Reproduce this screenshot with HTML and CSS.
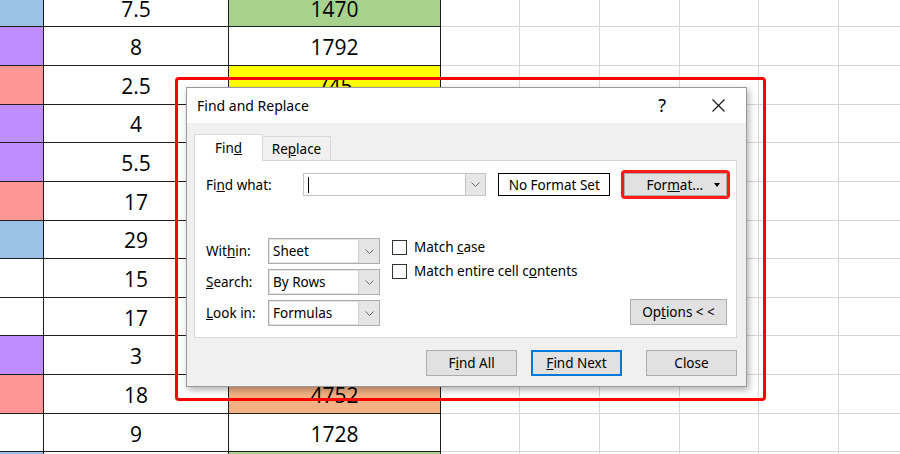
FILE: index.html
```html
<!DOCTYPE html>
<html lang="en">
<head>
    <meta charset="UTF-8">
    <meta name="viewport" content="width=device-width, initial-scale=1.0">
    <title>Find and Replace</title>
    <link rel="stylesheet" href="styles.css">
</head>
<body>

<div class="sheet">
    <!-- row 1 -->
    <div class="cell dark blue"></div><div class="cell dark">7.5</div><div class="cell dark green">1470</div>
    <div class="cell"></div><div class="cell"></div><div class="cell"></div><div class="cell"></div><div class="cell"></div><div class="cell"></div>
    <!-- row 2 -->
    <div class="cell dark purple"></div><div class="cell dark">8</div><div class="cell dark">1792</div>
    <div class="cell"></div><div class="cell"></div><div class="cell"></div><div class="cell"></div><div class="cell"></div><div class="cell"></div>
    <!-- row 3 -->
    <div class="cell dark salmon"></div><div class="cell dark">2.5</div><div class="cell dark yellow">745</div>
    <div class="cell"></div><div class="cell"></div><div class="cell"></div><div class="cell"></div><div class="cell"></div><div class="cell"></div>
    <!-- row 4 -->
    <div class="cell dark purple"></div><div class="cell dark">4</div><div class="cell dark"></div>
    <div class="cell"></div><div class="cell"></div><div class="cell"></div><div class="cell"></div><div class="cell"></div><div class="cell"></div>
    <!-- row 5 -->
    <div class="cell dark purple"></div><div class="cell dark">5.5</div><div class="cell dark"></div>
    <div class="cell"></div><div class="cell"></div><div class="cell"></div><div class="cell"></div><div class="cell"></div><div class="cell"></div>
    <!-- row 6 -->
    <div class="cell dark salmon"></div><div class="cell dark">17</div><div class="cell dark"></div>
    <div class="cell"></div><div class="cell"></div><div class="cell"></div><div class="cell"></div><div class="cell"></div><div class="cell"></div>
    <!-- row 7 -->
    <div class="cell dark blue"></div><div class="cell dark">29</div><div class="cell dark"></div>
    <div class="cell"></div><div class="cell"></div><div class="cell"></div><div class="cell"></div><div class="cell"></div><div class="cell"></div>
    <!-- row 8 -->
    <div class="cell dark"></div><div class="cell dark">15</div><div class="cell dark"></div>
    <div class="cell"></div><div class="cell"></div><div class="cell"></div><div class="cell"></div><div class="cell"></div><div class="cell"></div>
    <!-- row 9 -->
    <div class="cell dark"></div><div class="cell dark">17</div><div class="cell dark"></div>
    <div class="cell"></div><div class="cell"></div><div class="cell"></div><div class="cell"></div><div class="cell"></div><div class="cell"></div>
    <!-- row 10 -->
    <div class="cell dark purple"></div><div class="cell dark">3</div><div class="cell dark"></div>
    <div class="cell"></div><div class="cell"></div><div class="cell"></div><div class="cell"></div><div class="cell"></div><div class="cell"></div>
    <!-- row 11 -->
    <div class="cell dark salmon"></div><div class="cell dark">18</div><div class="cell dark orange">4752</div>
    <div class="cell"></div><div class="cell"></div><div class="cell"></div><div class="cell"></div><div class="cell"></div><div class="cell"></div>
    <!-- row 12 -->
    <div class="cell dark"></div><div class="cell dark">9</div><div class="cell dark">1728</div>
    <div class="cell"></div><div class="cell"></div><div class="cell"></div><div class="cell"></div><div class="cell"></div><div class="cell"></div>
    <!-- row 13 -->
    <div class="cell dark blue"></div><div class="cell dark"></div><div class="cell dark green"></div>
    <div class="cell"></div><div class="cell"></div><div class="cell"></div><div class="cell"></div><div class="cell"></div><div class="cell"></div>
</div>

<!-- red highlight around the dialog -->
<div class="frame"></div>

<div class="dialog">
    <div class="titlebar">
        <span class="title">Find and Replace</span>
        <span class="help">?</span>
        <svg class="close" width="13" height="13" viewBox="0 0 13 13">
            <path d="M0.5 0.5L12.5 12.5M12.5 0.5L0.5 12.5" stroke="#1a1a1a" stroke-width="1.2" fill="none"/>
        </svg>
    </div>

    <div class="body">
        <div class="tabs">
            <div class="tab active"><span>Fin<u>d</u></span></div>
            <div class="tab"><span>Re<u>p</u>lace</span></div>
        </div>

        <div class="panel">
            <div class="find-row">
                <span class="label find-label">Fi<u>n</u>d what:</span>
                <div class="combo find-combo">
                    <span class="caret"></span>
                    <span class="drop">
                        <svg width="9" height="5" viewBox="0 0 9 5"><path d="M0.5 0.5L4.5 4.5L8.5 0.5" stroke="#6b6b6b" fill="none"/></svg>
                    </span>
                </div>
                <div class="format-set">No Format Set</div>
                <div class="button format">
                    <span>For<u>m</u>at...</span>
                    <span class="arrow"></span>
                </div>
            </div>

            <div class="options">
                <div class="fields">
                    <div class="field">
                        <span class="label">Wit<u>h</u>in:</span>
                        <div class="combo select">
                            <span class="value">Sheet</span>
                            <span class="drop">
                                <svg width="9" height="5" viewBox="0 0 9 5"><path d="M0.5 0.5L4.5 4.5L8.5 0.5" stroke="#6b6b6b" fill="none"/></svg>
                            </span>
                        </div>
                    </div>
                    <div class="field">
                        <span class="label"><u>S</u>earch:</span>
                        <div class="combo select">
                            <span class="value">By Rows</span>
                            <span class="drop">
                                <svg width="9" height="5" viewBox="0 0 9 5"><path d="M0.5 0.5L4.5 4.5L8.5 0.5" stroke="#6b6b6b" fill="none"/></svg>
                            </span>
                        </div>
                    </div>
                    <div class="field">
                        <span class="label"><u>L</u>ook in:</span>
                        <div class="combo select">
                            <span class="value">Formulas</span>
                            <span class="drop">
                                <svg width="9" height="5" viewBox="0 0 9 5"><path d="M0.5 0.5L4.5 4.5L8.5 0.5" stroke="#6b6b6b" fill="none"/></svg>
                            </span>
                        </div>
                    </div>
                </div>

                <div class="checks">
                    <div class="check"><span class="box"></span><span>Match <u>c</u>ase</span></div>
                    <div class="check"><span class="box"></span><span>Match entire cell c<u>o</u>ntents</span></div>
                </div>

                <div class="button options-btn"><span>Op<u>t</u>ions &lt; &lt;</span></div>
            </div>
        </div>

        <div class="actions">
            <div class="button"><span>F<u>i</u>nd All</span></div>
            <div class="button default"><span><u>F</u>ind Next</span></div>
            <div class="button">Close</div>
        </div>
    </div>
</div>

</body>
</html>
```

FILE: styles.css
```css
body {
    margin: 0;
    width: 900px;
    height: 454px;
    overflow: hidden;
    background: #fff;
    position: relative;
}

/* spreadsheet behind the dialog */
.sheet {
    display: grid;
    grid-template-columns: 44px 185px 212px 79px 80px 80px 79px 80px 80px;
    grid-auto-rows: 38.65px;
    margin-top: -11.3px;
    font-family: "Open Sans", sans-serif;
    font-size: 21px;
    line-height: 15px;
    color: #000;
}
.cell {
    box-sizing: border-box;
    border-right: 1px solid #d6d6d6;
    border-bottom: 1px solid #d6d6d6;
    display: flex;
    justify-content: center;
    align-items: center;
    padding-top: 3px;
}
.cell.dark {
    border-color: #1e1e1e;
}
.blue { background-color: #9bc2e6; }
.purple { background-color: #c08dff; }
.salmon { background-color: #ff9696; }
.green { background-color: #a9d18e; }
.yellow { background-color: #ffff00; }
.orange { background-color: #f4b183; }

.frame {
    position: absolute;
    left: 175px;
    top: 77px;
    width: 591px;
    height: 324px;
    box-sizing: border-box;
    border: 3px solid #ff0000;
    border-radius: 4px;
}

/* dialog */
.dialog {
    position: absolute;
    left: 186px;
    top: 87px;
    width: 561px;
    height: 300px;
    box-sizing: border-box;
    border: 1px solid #9a9a9a;
    background: #f0f0f0;
    box-shadow: 2px 3px 7px rgba(0, 0, 0, 0.3);
    font-family: "Noto Sans", sans-serif;
    font-size: 13.5px;
    color: #000;
}
.titlebar {
    height: 35px;
    background: #fff;
    display: flex;
    align-items: center;
    padding-left: 10px;
}
.title {
    font-size: 14px;
}
.help {
    margin-left: auto;
    font-size: 18px;
    line-height: 18px;
    margin-top: -1px;
}
.close {
    margin-left: 46px;
    margin-right: 21px;
}

.body {
    padding: 11px 9px 0 7px;
}
.tabs {
    display: flex;
    align-items: flex-end;
    height: 26px;
}
.tab {
    box-sizing: border-box;
    width: 69px;
    height: 24px;
    margin-left: -1px;
    border: 1px solid #d9d9d9;
    border-bottom: none;
    background: #f0f0f0;
    display: flex;
    justify-content: center;
    align-items: center;
}
.tab.active {
    margin-left: 0;
    height: 27px;
    margin-bottom: -1px;
    background: #fff;
    position: relative;
    z-index: 1;
}

.panel {
    box-sizing: border-box;
    height: 178px;
    background: #fff;
    border: 1px solid #d9d9d9;
    padding: 12px 9px 0 11px;
}
.find-row {
    display: flex;
    align-items: center;
    height: 23px;
}
.label {
    width: 62px;
    flex-shrink: 0;
}
.find-label {
    width: 97px;
}
.combo {
    box-sizing: border-box;
    display: flex;
    align-items: center;
    background: #fff;
}
.find-combo {
    width: 184px;
    height: 23px;
    border: 1px solid #c4c4c4;
}
.caret {
    width: 1px;
    height: 16px;
    margin-left: 4px;
    background: #000;
}
.drop {
    margin-left: auto;
    width: 20px;
    align-self: stretch;
    box-sizing: border-box;
    border-left: 1px solid #c4c4c4;
    background: #e6e6e6;
    display: flex;
    justify-content: center;
    align-items: center;
}
.format-set {
    box-sizing: border-box;
    width: 113px;
    height: 23px;
    margin-left: 12px;
    border: 1px solid #000;
    display: flex;
    justify-content: center;
    align-items: center;
}

.button {
    box-sizing: border-box;
    width: 91px;
    height: 26px;
    background: #e1e1e1;
    border: 1px solid #adadad;
    display: flex;
    justify-content: center;
    align-items: center;
}
.format {
    width: 103px;
    height: 23px;
    margin-left: 14px;
    justify-content: flex-start;
    padding-left: 21px;
    border-radius: 1px;
    outline: 3px solid #ff1a1a;
    outline-offset: 0;
}
.arrow {
    margin-left: auto;
    margin-right: 6px;
    width: 0;
    height: 0;
    border-left: 3px solid transparent;
    border-right: 3px solid transparent;
    border-top: 4px solid #000;
}

.options {
    display: flex;
    margin-top: 42px;
}
.fields {
    display: flex;
    flex-direction: column;
    gap: 5px;
}
.field {
    display: flex;
    align-items: center;
}
.select {
    width: 112px;
    height: 26px;
    border: 1px solid #adadad;
    box-shadow: inset 0 0 0 1px #e4e4e4;
}
.select .drop {
    width: 21px;
    border-left-color: #d0d0d0;
    background: #e5e5e5;
}
.value {
    padding-left: 4px;
}

.checks {
    margin-left: 12px;
    margin-top: -3px;
}
.check {
    display: flex;
    align-items: center;
    height: 24px;
}
.box {
    box-sizing: border-box;
    width: 15px;
    height: 15px;
    border: 1px solid #333;
    background: #fff;
    margin-right: 7px;
}

.options-btn {
    width: 97px;
    margin-left: auto;
    align-self: flex-end;
    margin-bottom: 1px;
}

.actions {
    display: flex;
    justify-content: flex-end;
    margin-top: 12px;
}
.actions .button {
    margin-left: 14px;
}
.actions .button:last-child {
    margin-left: 24px;
}
.button.default {
    border: 2px solid #0078d7;
}
```
